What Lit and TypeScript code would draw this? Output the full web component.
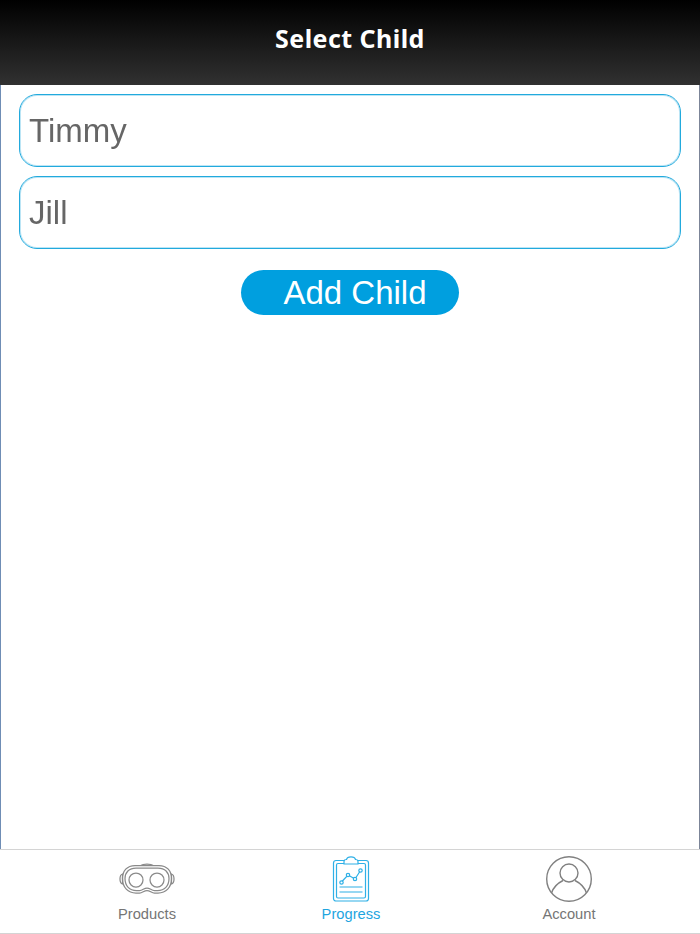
import { LitElement, html, css, svg } from "lit";
import { customElement } from "lit/decorators.js";

const GOGGLES = svg`<svg class="ico" width="56" height="34" viewBox="0 0 56 34" fill="none" stroke="#8a8a8a" stroke-width="1.25">
  <path d="M16 3.5 H40 C48 3.5 52.5 9 52.5 16.5 C52.5 25.5 47 31 39 31 H35.5 C32.5 31 31 28.5 28 28.5 C25 28.5 23.5 31 20.5 31 H17 C9 31 3.5 25.5 3.5 16.5 C3.5 9 8 3.5 16 3.5 Z"/>
  <path d="M17 6 H39 C46 6 50 10.5 50 16.5 C50 24 45.5 28.5 38.5 28.5 H35.5 C32.5 28.5 31 26 28 26 C25 26 23.5 28.5 20.5 28.5 H17.5 C10.5 28.5 6 24 6 16.5 C6 10.5 10 6 17 6 Z"/>
  <circle cx="17" cy="18" r="7"/><circle cx="38" cy="18" r="7"/>
  <path d="M3.5 12 C1.5 12.5 1 14 1 17 C1 20 1.5 21.5 3.5 22 Z"/><path d="M52.5 12 C54.5 12.5 55 14 55 17 C55 20 54.5 21.5 52.5 22 Z"/>
  <path d="M22 3.5 C24 1.5 32 1.5 34 3.5"/>
</svg>`;

const CLIPBOARD = svg`<svg class="ico" width="38" height="46" viewBox="0 0 38 46" fill="none" stroke="#2fb0e6" stroke-width="1.2">
  <rect x="1.5" y="4.5" width="35" height="40.5" rx="2.5"/>
  <rect x="4.5" y="7.5" width="29" height="34.5" rx="1.5"/>
  <path d="M12 8 V5.5 C12 4 13 3.5 14.5 3.5 C15 1.5 17 .8 19 .8 C21 .8 23 1.5 23.5 3.5 C25 3.5 26 4 26 5.5 V8 Z" fill="#fff"/>
  <path d="M9.5 26 L16 19 L23 23 L28.5 14.5" />
  <circle cx="9.5" cy="26.5" r="1.7" fill="#fff"/><circle cx="16" cy="19" r="1.7" fill="#fff"/><circle cx="23" cy="23" r="1.7" fill="#fff"/><circle cx="28.5" cy="14.5" r="1.7" fill="#fff"/>
  <path d="M7.5 31 H30.5 M7.5 36 H30.5"/>
</svg>`;

const PERSON = svg`<svg class="ico person" width="46" height="46" viewBox="0 0 46 46" fill="none" stroke="#808080" stroke-width="1.4">
  <circle cx="23" cy="23" r="22.3"/>
  <circle cx="23" cy="17" r="9"/>
  <path d="M5.5 37 C7.5 31 12 27 17 24.5 M40.5 37 C38.5 31 34 27 29 24.5"/>
</svg>`;

@customElement("app-root")
export class AppRoot extends LitElement {
  static styles = css`
    :host { display: block; width: 700px; height: 934px; font-family: "Liberation Sans", Arial, sans-serif; background: #fff; }
    .page { display: flex; flex-direction: column; height: 934px; box-sizing: border-box; }
    header {
      height: 85px; flex: none; display: flex; align-items: center; justify-content: center;
      padding-bottom: 9px; box-sizing: border-box;
      background: linear-gradient(#000 0%, #313131 100%);
      color: #fff; font-family: "Noto Sans", sans-serif; font-weight: 700; font-size: 25px; letter-spacing: 0.45px;
    }
    main {
      flex: 1; box-sizing: border-box; padding: 9px 18px 0; display: flex; flex-direction: column; gap: 9px;
      border-left: 1px solid #6f8db5; border-right: 1px solid #7c8598;
    }
    .child {
      height: 73px; box-sizing: border-box; border: 1px solid #22aadd; border-radius: 18px;
      box-shadow: inset 0 0 0 1px rgba(34, 170, 221, 0.3);
      display: flex; align-items: center; padding-left: 9px; font-size: 33px; color: #666;
    }
    .name { will-change: transform; }
    .actions { display: flex; justify-content: center; margin-top: 12px; }
    .add {
      width: 218px; height: 45px; border: 0; border-radius: 23px; background: #009fdf; color: #fff;
      font: 33px/45px "Liberation Sans", Arial, sans-serif; padding: 0 0 0 10px; text-align: center;
    }
    nav {
      height: 85px; flex: none; box-sizing: border-box; position: relative;
      border-top: 1px solid #d4d4d4; border-bottom: 1px solid #d4d4d4; background: #fff;
      display: grid; grid-template-columns: 294px 114px 1fr;
    }
    .tab { display: flex; flex-direction: column; align-items: center; color: #757575; font-size: 14.7px; line-height: 17px; }
    .tab.active { color: #1ea5df; }
    .tab:last-child { padding-left: 30px; }
    .icon { height: 47px; display: flex; align-items: center; justify-content: center; margin-top: 5px; margin-bottom: 4px; }
    .ico { display: block; }
    .person { margin-top: 1px; }
  `;

  render() {
    return html`<div class="page">
      <header>Select Child</header>
      <main>
        <div class="child"><span class="name">Timmy</span></div>
        <div class="child"><span class="name">Jill</span></div>
        <div class="actions"><button class="add">Add Child</button></div>
      </main>
      <nav>
        <div class="tab"><div class="icon">${GOGGLES}</div>Products</div>
        <div class="tab active"><div class="icon">${CLIPBOARD}</div>Progress</div>
        <div class="tab"><div class="icon">${PERSON}</div>Account</div>
      </nav>
    </div>`;
  }
}
